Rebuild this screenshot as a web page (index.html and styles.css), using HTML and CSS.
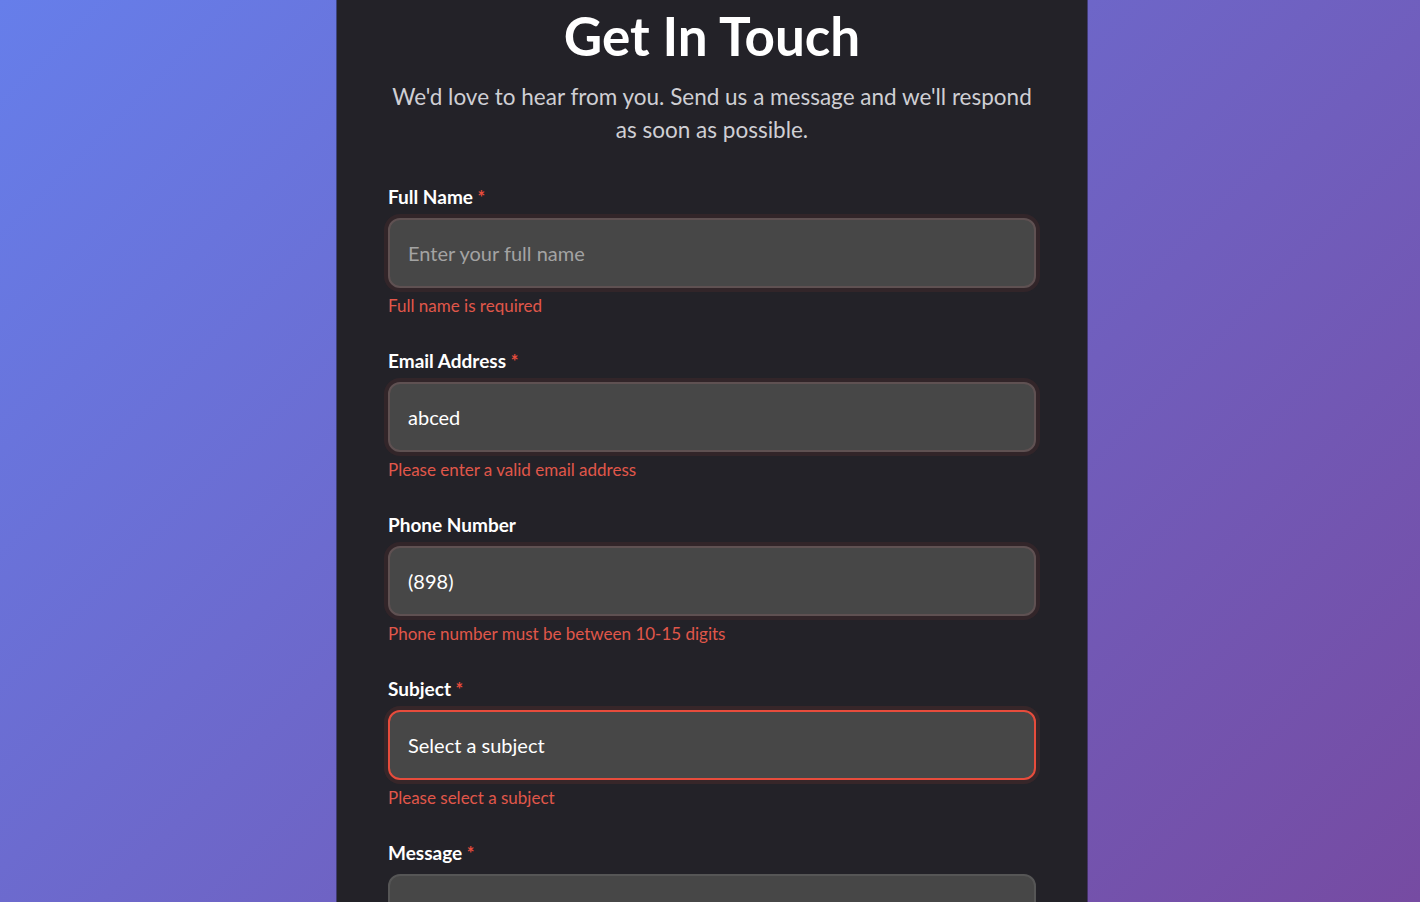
FILE: index.html
```html
<!DOCTYPE html>
<html lang="en">
<head>
<meta charset="utf-8">
<title>Get In Touch</title>
<link rel="stylesheet" href="styles.css">
</head>
<body>
<div class="page">
  <main class="card">
    <h1 class="title">Get In Touch</h1>
    <p class="subtitle">We'd love to hear from you. Send us a message and we'll respond as soon as possible.</p>
    <form class="form">
      <div class="group">
        <label class="label">Full Name <span class="req">*</span></label>
        <div class="field invalid"><span class="placeholder">Enter your full name</span></div>
        <div class="error">Full name is required</div>
      </div>
      <div class="group">
        <label class="label">Email Address <span class="req">*</span></label>
        <div class="field invalid"><span class="value">abced</span></div>
        <div class="error">Please enter a valid email address</div>
      </div>
      <div class="group">
        <label class="label">Phone Number</label>
        <div class="field invalid"><span class="value">(898)</span></div>
        <div class="error">Phone number must be between 10-15 digits</div>
      </div>
      <div class="group">
        <label class="label">Subject <span class="req">*</span></label>
        <div class="field focus"><span class="value">Select a subject</span></div>
        <div class="error">Please select a subject</div>
      </div>
      <div class="group">
        <label class="label">Message <span class="req">*</span></label>
        <div class="field textarea"></div>
      </div>
    </form>
  </main>
</div>
</body>
</html>
```

FILE: styles.css
```css
* { box-sizing: border-box; }
html, body { margin: 0; padding: 0; height: 100%; overflow: hidden; }
body {
  background: linear-gradient(135deg, #667eea 0%, #764ba2 100%);
  font-family: "Lato", "Open Sans", sans-serif;
  color: #fff;
}
.page {
  display: flex;
  justify-content: center;
  padding-left: 4px;
  height: 902px;
}
.card {
  width: 750px;
  background: #232228;
  padding: 0 51px;
  box-shadow: 0 0 0 1px rgba(20,20,30,0.5);
}
.title {
  margin: 0;
  padding-top: 5px;
  text-align: center;
  font-size: 53px;
  font-weight: 700;
  line-height: 62px;
  color: #fff;
}
.subtitle {
  margin: 13px 0 0;
  text-align: center;
  font-size: 22.5px;
  line-height: 33px;
  color: #cfcfd4;
}
.form { margin-top: 40px; display: flex; flex-direction: column; gap: 34px; }
.group { display: flex; flex-direction: column; }
.label {
  font-size: 19px;
  font-weight: 700;
  line-height: 22px;
  margin-bottom: 10px;
  color: #fff;
}
.req { color: #e74c3c; font-weight: 700; font-size: 18px; }
.field {
  height: 70px;
  border-radius: 12px;
  background: #474747;
  border: 2px solid #5b5555;
  padding: 0 18px;
  display: flex;
  align-items: center;
  font-size: 20px;
}
.field.invalid {
  border-color: #5f5152;
  box-shadow: 0 0 0 4px rgba(231, 76, 60, 0.08);
}
.field.focus {
  border-color: #e74c3c;
  box-shadow: 0 0 0 4px rgba(231, 76, 60, 0.1);
}
.field.textarea { height: 140px; border-color: #565656; }
.placeholder { color: #a3a3a3; }
.value { color: #fff; }
.error {
  margin-top: 8px;
  font-size: 17px;
  line-height: 20px;
  color: #e0574a;
}
```
